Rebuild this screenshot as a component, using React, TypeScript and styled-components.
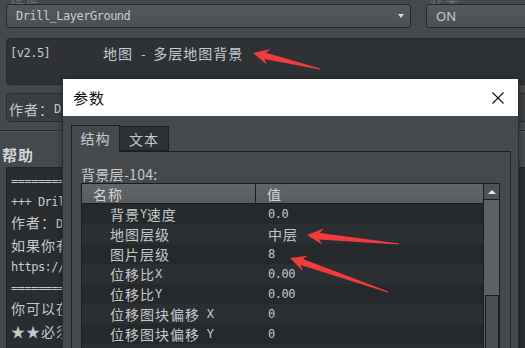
import React from "react";
import styled, { createGlobalStyle } from "styled-components";

const MONO = `"DejaVu Sans Mono", "Liberation Mono", monospace`;
const HAN_FONT = `"Noto Sans CJK SC", "Noto Sans", sans-serif`;

const GlobalStyle = createGlobalStyle`
    html, body {
        margin: 0;
        padding: 0;
        background: #45494b;
        overflow: hidden;
    }
`;

const Screen = styled.div`
    position: relative;
    width: 525px;
    height: 348px;
    overflow: hidden;
    background: #45494b;
    font-family: ${MONO};
    font-size: 12px;
    letter-spacing: -0.5px;
    color: #c4c9cd;
`;

const Han = styled.span`
    font-family: ${HAN_FONT};
    font-size: 14px;
    letter-spacing: 1px;
`;

// splits a string into CJK / latin runs so each gets its own font size
const HAN_RE = /([\u2600-\u26ff\u3000-\u9fff\uff00-\uffef]+)/;
const Mixed = ({ text }: { text: string }) => (
    <>
        {text.split(HAN_RE).map((part, i) =>
            HAN_RE.test(part) ? <Han key={i}>{part}</Han> : <span key={i}>{part}</span>
        )}
    </>
);

/* ---------- page behind the dialog ---------- */

const Page = styled.div`
    display: flex;
    flex-direction: column;
    width: 760px;
`;

const LabelRow = styled.div`
    display: grid;
    grid-template-columns: 420px 1fr;
    align-items: end;
    height: 4px;
    overflow: hidden;
    padding-left: 10px;
    color: #6a6e72;
`;

const FieldLabel = styled.div`
    line-height: 10px;
    margin-bottom: 3px;
`;

const TopRow = styled.div`
    display: flex;
    gap: 15px;
    height: 24px;
    padding-left: 6px;
`;

const Field = styled.div<{ $width: number }>`
    width: ${(p) => p.$width}px;
    box-sizing: border-box;
    display: flex;
    align-items: center;
    justify-content: space-between;
    border: 1px solid #27292b;
    border-radius: 3px;
    background: linear-gradient(#54585a, #4c5052);
    padding: 0 6px 0 9px;
    color: #c3cbd3;
`;

const Caret = styled.span`
    width: 0;
    height: 0;
    border-left: 3.5px solid transparent;
    border-right: 3.5px solid transparent;
    border-top: 4px solid #d6d8da;
`;

const ToggleText = styled.span`
    font-family: "Noto Sans", sans-serif;
    font-size: 13px;
    letter-spacing: 0;
`;

const DescBox = styled.div`
    margin: 10px 0 0 6px;
    height: 47px;
    box-sizing: border-box;
    border: 1px solid #27292b;
    border-radius: 4px;
    background: #2f3235;
    padding: 5px 3px;
    display: flex;
    align-items: flex-start;
    line-height: 19px;
`;

const Version = styled.span`
    width: 93px;
    flex: none;
`;

const AuthorBox = styled.div`
    margin: 8px 0 0 6px;
    height: 29px;
    box-sizing: border-box;
    border: 1px solid #2a2c2e;
    border-radius: 4px;
    background: #3b3e41;
    padding: 2px 2px 0;
    display: flex;
    align-items: center;
`;

const Divider = styled.div`
    margin-top: 8px;
    height: 1px;
    background: #2a2c2e;
    box-shadow: 0 1px 0 #515557;
`;

const HelpTitle = styled.div`
    padding: 14px 0 0 2px;
    line-height: 20px;
    font-family: ${HAN_FONT};
    font-size: 15px;
    font-weight: bold;
    letter-spacing: 1px;
    color: #d4d6d8;
`;

const HelpBox = styled.div`
    margin: 2px 0 0 6px;
    height: 200px;
    border: 1px solid #222426;
    background: #2a2d2f;
    padding: 3px 4px;
    line-height: 20.5px;
    white-space: pre;
`;

/* ---------- dialog ---------- */

const Dialog = styled.div`
    position: absolute;
    left: 62px;
    top: 79px;
    width: 457px;
    height: 290px;
    box-sizing: border-box;
    border: 1px solid #2b2d2f;
    border-top: none;
    background: #45494c;
    box-shadow: 0 0 6px rgba(0, 0, 0, 0.35);
`;

const TitleBar = styled.div`
    height: 37px;
    background: #ffffff;
    display: flex;
    align-items: center;
    justify-content: space-between;
    padding: 0 14px 0 10px;
    color: #111;
    font-family: ${HAN_FONT};
    font-size: 15px;
    letter-spacing: 1px;
`;

const DialogBody = styled.div`
    padding: 9px 7px 0 8px;
`;

const TabBar = styled.div`
    display: flex;
    align-items: flex-end;
    height: 26px;
`;

const Tab = styled.div<{ $active?: boolean }>`
    position: relative;
    z-index: ${(p) => (p.$active ? 1 : 0)};
    width: 49px;
    height: ${(p) => (p.$active ? 27 : 25)}px;
    margin-bottom: ${(p) => (p.$active ? -1 : 0)}px;
    box-sizing: border-box;
    border: 1px solid #1d1f21;
    border-left: ${(p) => (p.$active ? "1px solid #1d1f21" : "none")};
    border-bottom: ${(p) => (p.$active ? "none" : "1px solid #1d1f21")};
    background: ${(p) => (p.$active ? "#45494c" : "#2e3133")};
    display: flex;
    align-items: center;
    justify-content: center;
    padding-bottom: ${(p) => (p.$active ? 2 : 0)}px;
    color: #c8cacc;
`;

const TabPanel = styled.div`
    width: 440px;
    height: 220px;
    box-sizing: border-box;
    border: 1px solid #1d1f21;
    padding: 14px 9px 0 9px;
`;

const PanelLabel = styled.div`
    line-height: 17px;
    font-family: ${HAN_FONT};
    font-size: 14px;
    letter-spacing: 0.3px;
    color: #c8cacc;
`;

const Table = styled.div`
    display: flex;
    width: 419px;
    height: 180px;
    box-sizing: border-box;
    border: 1px solid #1b1d1f;
`;

const Grid = styled.div`
    flex: 1;
    border-right: 1px solid #1b1d1f;
    display: flex;
    flex-direction: column;
`;

const HeaderRow = styled.div`
    display: grid;
    grid-template-columns: 174px 1fr;
    height: 20px;
    box-sizing: border-box;
    border-bottom: 1px solid #1b1d1f;
    background: linear-gradient(#62666a, #585c5e);
    color: #d2d4d6;
`;

const HeaderCell = styled.div<{ $first?: boolean }>`
    display: flex;
    align-items: center;
    padding-left: 11px;
    border-right: ${(p) => (p.$first ? "1px solid #1b1d1f" : "none")};
`;

const Row = styled.div<{ $odd: boolean }>`
    display: grid;
    grid-template-columns: 175px 1fr;
    height: 20px;
    background: ${(p) => (p.$odd ? "#26292b" : "#2c2f31")};
`;

const NameCell = styled.div`
    display: flex;
    align-items: center;
    padding-left: 28px;
    white-space: pre;
    color: #c4c7ca;
`;

const ValueCell = styled.div`
    display: flex;
    align-items: center;
    padding-left: 11px;
    color: #bcc6d0;
`;

const Scrollbar = styled.div`
    width: 15px;
    display: flex;
    flex-direction: column;
    background: #5d6164;
`;

const ScrollButton = styled.div`
    height: 16px;
    box-sizing: border-box;
    border-bottom: 1px solid #1b1d1f;
    background: #4f5355;
    display: flex;
    align-items: center;
    justify-content: center;
`;

const UpTriangle = styled.span`
    width: 0;
    height: 0;
    border-left: 4px solid transparent;
    border-right: 4px solid transparent;
    border-bottom: 4px solid #e8e8e8;
`;

const Thumb = styled.div`
    flex: 1;
    margin: 95px 0 0 1px;
    border: 1px solid #1b1d1f;
    background: #4b4f51;
`;

const Overlay = styled.svg`
    position: absolute;
    left: 0;
    top: 0;
    pointer-events: none;
    z-index: 10;
`;

/* ---------- data ---------- */

const helpLines = [
    "================================",
    "+++ Drill_LayerGround +++",
    "作者：Drill_up",
    "如果你有兴趣，也可以来看看更多我写的drill插件哦^_^",
    "https://rpg.blue/thread-409713-1-1.html",
    "================================",
    "你可以在地图上放置多层地图背景。",
    "★★必须放在所有地图类插件前面★★",
];

const params = [
    ["背景Y速度", "0.0"],
    ["地图层级", "中层"],
    ["图片层级", "8"],
    ["位移比X", "0.00"],
    ["位移比Y", "0.00"],
    ["位移图块偏移 X", "0"],
    ["位移图块偏移 Y", "0"],
    ["位移图块速度 X", "0"],
];

type Pt = [number, number];

const arrows: { tip: Pt; tail: Pt }[] = [
    { tip: [253, 53], tail: [320, 69] },
    { tip: [307, 235], tail: [399, 244] },
    { tip: [290, 258], tail: [388, 292] },
];

const arrowPoints = (tip: Pt, tail: Pt) => {
    const dx = tail[0] - tip[0];
    const dy = tail[1] - tip[1];
    const len = Math.hypot(dx, dy);
    const ux = dx / len;
    const uy = dy / len;
    const nx = -uy;
    const ny = ux;
    const at = (d: number, w: number): Pt => [tip[0] + ux * d + nx * w, tip[1] + uy * d + ny * w];
    const pts: Pt[] = [
        tip,
        at(16, 8),
        at(12.5, 3.2),
        [tail[0] + nx * 0.6, tail[1] + ny * 0.6],
        [tail[0] - nx * 0.6, tail[1] - ny * 0.6],
        at(12.5, -3.2),
        at(16, -8),
    ];
    return pts.map((p) => `${p[0].toFixed(1)},${p[1].toFixed(1)}`).join(" ");
};

const App = () => {
    return (
        <Screen>
            <GlobalStyle />
            <Page>
                <LabelRow>
                    <FieldLabel>
                        <Mixed text="插件" />
                    </FieldLabel>
                    <FieldLabel>
                        <Mixed text="状态" />
                    </FieldLabel>
                </LabelRow>
                <TopRow>
                    <Field $width={405}>
                        <span>Drill_LayerGround</span>
                        <Caret />
                    </Field>
                    <Field $width={300}>
                        <ToggleText>ON</ToggleText>
                    </Field>
                </TopRow>
                <DescBox>
                    <Version>[v2.5]</Version>
                    <span>
                        <Mixed text="地图 - 多层地图背景" />
                    </span>
                </DescBox>
                <AuthorBox>
                    <Mixed text="作者：Drill_up" />
                </AuthorBox>
                <Divider />
                <HelpTitle>帮助</HelpTitle>
                <HelpBox>
                    {helpLines.map((line, i) => (
                        <div key={i}>
                            <Mixed text={line} />
                        </div>
                    ))}
                </HelpBox>
            </Page>

            <Dialog>
                <TitleBar>
                    <span>参数</span>
                    <svg width="12" height="12" viewBox="0 0 12 12">
                        <path d="M0.5 0.5 L11.5 11.5 M11.5 0.5 L0.5 11.5" stroke="#111" strokeWidth="1.1" />
                    </svg>
                </TitleBar>
                <DialogBody>
                    <TabBar>
                        <Tab $active>
                            <Han>结构</Han>
                        </Tab>
                        <Tab>
                            <Han>文本</Han>
                        </Tab>
                    </TabBar>
                    <TabPanel>
                        <PanelLabel>背景层-104:</PanelLabel>
                        <Table>
                            <Grid>
                                <HeaderRow>
                                    <HeaderCell $first>
                                        <Han>名称</Han>
                                    </HeaderCell>
                                    <HeaderCell>
                                        <Han>值</Han>
                                    </HeaderCell>
                                </HeaderRow>
                                {params.map(([name, value], i) => (
                                    <Row key={name} $odd={i % 2 === 0}>
                                        <NameCell>
                                            <Mixed text={name} />
                                        </NameCell>
                                        <ValueCell>
                                            <Mixed text={value} />
                                        </ValueCell>
                                    </Row>
                                ))}
                            </Grid>
                            <Scrollbar>
                                <ScrollButton>
                                    <UpTriangle />
                                </ScrollButton>
                                <Thumb />
                            </Scrollbar>
                        </Table>
                    </TabPanel>
                </DialogBody>
            </Dialog>

            <Overlay width="525" height="348" viewBox="0 0 525 348">
                {arrows.map((a, i) => (
                    <polygon key={i} points={arrowPoints(a.tip, a.tail)} fill="#f23c3c" />
                ))}
            </Overlay>
        </Screen>
    );
};

export default App;
